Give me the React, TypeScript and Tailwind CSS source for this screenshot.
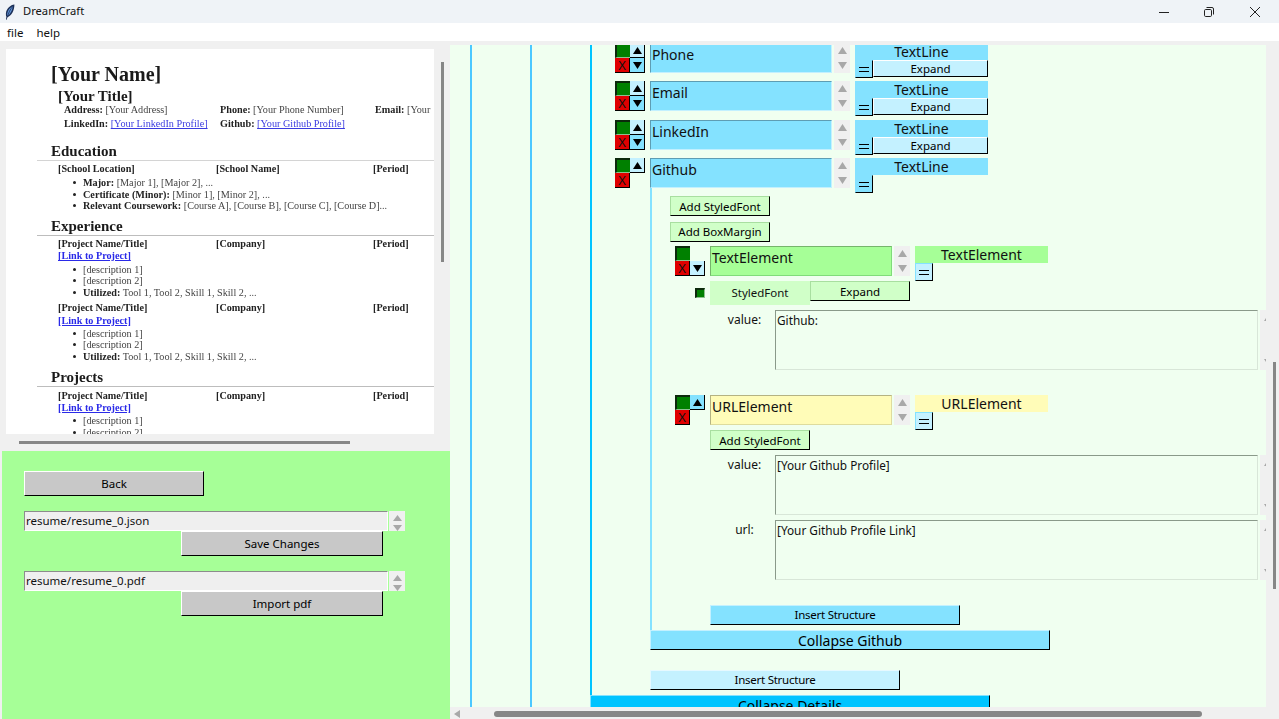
import React from "react";

const SANS = { fontFamily: '"Noto Sans", sans-serif' };

function Raised({ className = "", children }: { className?: string; children?: React.ReactNode }) {
  return (
    <div className={"flex items-center justify-center shrink-0 border-t border-l border-b border-r border-b-black border-r-black text-black " + className}>
      {children}
    </div>
  );
}

function Tri({ down = false, color = "#000", w = 9, h = 7 }: { down?: boolean; color?: string; w?: number; h?: number }) {
  return (
    <svg width={w} height={h} viewBox="0 0 10 8" preserveAspectRatio="none" className="block">
      <polygon points={down ? "0,0 10,0 5,8" : "5,0 10,8 0,8"} fill={color} />
    </svg>
  );
}

function Spinner({ tall = false, className = "" }: { tall?: boolean; className?: string }) {
  return (
    <div className={"w-[16px] shrink-0 bg-[#f0f0f0] flex flex-col items-center justify-between " + (tall ? "h-[30px] py-[4px] " : "h-[20px] pt-[4px] ") + className}>
      <Tri color="#a8a8a8" w={9} h={tall ? 7 : 6} />
      <Tri down color="#a8a8a8" w={9} h={tall ? 7 : 6} />
    </div>
  );
}

type Tone = "blue" | "green" | "yellow";

const FIELD: Record<Tone, string> = {
  blue: "bg-[#84e2ff] border-t-[#5e9db3] border-l-[#5e9db3] border-b-[#c2f0ff] border-r-[#c2f0ff]",
  green: "bg-[#a6ff97] border-t-[#76b56b] border-l-[#76b56b] border-b-[#80dc7a] border-r-[#80dc7a]",
  yellow: "bg-[#fffcb8] border-t-[#b5b383] border-l-[#b5b383] border-b-[#dedc9e] border-r-[#dedc9e]",
};
const LABEL: Record<Tone, string> = {
  blue: "bg-[#84e2ff]",
  green: "bg-[#a6ff97]",
  yellow: "bg-[#fffcb8]",
};

function Row({
  name,
  label,
  tone,
  up,
  down,
  upClass = "bg-[#c4f1ff]",
  downClass = "bg-[#84e2ff]",
  expand = false,
  eqClass = "bg-[#84e2ff]",
  className = "",
}: {
  name: string;
  label: string;
  tone: Tone;
  up?: boolean;
  down?: boolean;
  upClass?: string;
  downClass?: string;
  expand?: boolean;
  eqClass?: string;
  className?: string;
}) {
  return (
    <div className={"flex h-[35px] " + className}>
      <div className="grid grid-cols-[15px_15px] grid-rows-[15px_15px] h-[30px] shrink-0">
        <div className="bg-[#008000] border-t-2 border-l-2 border-t-[#0c2a0c] border-l-[#0c2a0c] border-b border-b-[#8fc08f]" />
        {up ? (
          <div className={"flex items-center justify-center border-b border-r border-b-black border-r-black " + upClass}>
            <Tri />
          </div>
        ) : (
          <div />
        )}
        <div className="bg-[#e00000] border-b border-r border-b-black border-r-black flex items-center justify-center text-[13px] leading-none text-[#111]">
          X
        </div>
        {down ? (
          <div className={"flex items-center justify-center border-b border-r border-b-black border-r-black " + downClass}>
            <Tri down />
          </div>
        ) : (
          <div />
        )}
      </div>
      <div className={"ml-[5px] w-[182px] h-[30px] shrink-0 border-t border-l border-b border-r px-[1px] text-[14px] leading-[22px] text-[#111] " + FIELD[tone]}>
        {name}
      </div>
      <Spinner tall className="ml-[2px]" />
      <div className="ml-[5px] w-[133px] shrink-0 flex flex-col">
        <div className={"h-[17px] text-center text-[14px] leading-[18px] text-[#111] " + LABEL[tone]}>{label}</div>
        <div className="flex">
          <Raised className={"w-[18px] h-[18px] border-t-[#84e2ff] border-l-[#84e2ff] text-[13px] leading-none " + eqClass}>
            <span className="block w-[10px] h-[5px] border-t border-b border-t-black border-b-black" />
          </Raised>
          {expand && (
            <Raised className="w-[115px] h-[17px] bg-[#c4f1ff] border-t-white border-l-white text-[11.5px] leading-none">
              Expand
            </Raised>
          )}
        </div>
      </div>
    </div>
  );
}

function LightBtn({ className = "", children }: { className?: string; children?: React.ReactNode }) {
  return (
    <Raised className={"w-[100px] bg-[#d0ffc8] border-t-[#a8dfa0] border-l-[#a8dfa0] text-[11.5px] leading-none " + className}>
      {children}
    </Raised>
  );
}

function TextBox({ label, value, className = "" }: { label: string; value: string; className?: string }) {
  return (
    <div className={"flex h-[60px] " + className}>
      <div className="ml-[44px] w-[61px] shrink-0 text-center text-[12px] leading-[20px] text-[#111]">{label}</div>
      <div className="w-[483px] h-[60px] shrink-0 bg-[#f0fff0] border-t border-l border-b border-r border-t-[#8a9a8a] border-l-[#8a9a8a] border-b-[#d8e6d8] border-r-[#d8e6d8] px-[1px] text-[11.8px] leading-[18px] text-[#111]">
        {value}
      </div>
      <Spinner tall className="h-[60px] ml-[2px]" />
    </div>
  );
}

function H({ children, className = "" }: { children: React.ReactNode; className?: string }) {
  return (
    <div className={"ml-[31px] h-[19px] pl-[14px] border-b border-b-[#bdbdbd] text-[15px] leading-[18px] font-bold text-[#1a1a1a] " + className}>
      {children}
    </div>
  );
}

function Cols({ a, b, c, className = "" }: { a: string; b: string; c: string; className?: string }) {
  return (
    <div className={"ml-[52px] flex h-[12px] text-[10.2px] leading-[12px] font-bold text-[#222] whitespace-nowrap " + className}>
      <span className="w-[158px] shrink-0">{a}</span>
      <span className="w-[157px] shrink-0">{b}</span>
      <span>{c}</span>
    </div>
  );
}

function Link({ className = "" }: { className?: string }) {
  return (
    <div className={"ml-[52px] h-[12px] text-[10.2px] leading-[12px] font-bold text-[#2a2ae8] underline " + className}>
      [Link to Project]
    </div>
  );
}

function Li({ children, className = "" }: { children: React.ReactNode; className?: string }) {
  return (
    <div className={"ml-[67px] flex h-[11.4px] items-center text-[10.2px] leading-[11px] text-[#444] whitespace-nowrap " + className}>
      <span className="w-[10px] shrink-0 flex items-center">
        <span className="block w-[3px] h-[3px] rounded-full bg-[#222]" />
      </span>
      <span>{children}</span>
    </div>
  );
}

function B({ children }: { children: React.ReactNode }) {
  return <b className="text-[#222]">{children}</b>;
}

function ProjectBlock({ mt, linkMt = "mt-0", liMt = "mt-[1px]" }: { mt: string; linkMt?: string; liMt?: string }) {
  return (
    <>
      <Cols a="[Project Name/Title]" b="[Company]" c="[Period]" className={mt} />
      <Link className={linkMt} />
      <Li className={liMt}>[description 1]</Li>
      <Li>[description 2]</Li>
      <Li>
        <B>Utilized:</B> Tool 1, Tool 2, Skill 1, Skill 2, ...
      </Li>
    </>
  );
}

function Resume() {
  return (
    <div className="ml-[6px] pt-[8px] w-[428px] h-[393px]">
      <div className="h-[385px] bg-white overflow-hidden blur-[0.3px]" style={{ fontFamily: '"Liberation Serif", serif' }}>
        <div className="ml-[45px] pt-[13px] h-[37px] text-[20px] leading-[24px] font-bold text-[#1a1a1a]">[Your Name]</div>
        <div className="ml-[52px] mt-[1px] h-[18px] text-[15px] leading-[18px] font-bold text-[#1a1a1a]">[Your Title]</div>
        <div className="ml-[58px] -mt-[2px] flex h-[14px] text-[10.2px] leading-[14px] text-[#444] whitespace-nowrap">
          <span className="w-[156px] shrink-0"><B>Address:</B> [Your Address]</span>
          <span className="w-[155px] shrink-0"><B>Phone:</B> [Your Phone Number]</span>
          <span><B>Email:</B> [Your</span>
        </div>
        <div className="ml-[58px] flex h-[14px] text-[10.2px] leading-[14px] text-[#444] whitespace-nowrap">
          <span className="w-[156px] shrink-0"><B>LinkedIn:</B> <span className="text-[#3b3be0] underline">[Your LinkedIn Profile]</span></span>
          <span><B>Github:</B> <span className="text-[#3b3be0] underline">[Your Github Profile]</span></span>
        </div>
        <H className="mt-[11px] border-b-[#d4d4d4]">Education</H>
        <Cols a="[School Location]" b="[School Name]" c="[Period]" className="mt-[2px]" />
        <Li className="mt-[2px]"><B>Major:</B> [Major 1], [Major 2], ...</Li>
        <Li><B>Certificate (Minor):</B> [Minor 1], [Minor 2], ...</Li>
        <Li><B>Relevant Coursework:</B> [Course A], [Course B], [Course C], [Course D]...</Li>
        <H className="mt-[6px]">Experience</H>
        <ProjectBlock mt="mt-[2px]" liMt="mt-[1.5px]" />
        <ProjectBlock mt="mt-[4px]" linkMt="mt-[1px]" liMt="mt-[1px]" />
        <H className="mt-[6px]">Projects</H>
        <ProjectBlock mt="mt-[2.5px]" liMt="mt-[1.5px]" />
      </div>
    </div>
  );
}

function FileRow({ value, action, mt }: { value: string; action: string; mt: string }) {
  return (
    <div className={mt}>
      <div className="flex">
        <div className="w-[364px] h-[20px] bg-[#efefef] border-t border-l border-b border-r border-t-[#8c8c8c] border-l-[#8c8c8c] border-b-white border-r-white px-[1px] text-[11.5px] leading-[18px] text-[#111]">
          {value}
        </div>
        <Spinner className="ml-[1px]" />
      </div>
      <Raised className="ml-[157px] w-[202px] h-[25px] pt-[1px] bg-[#c8c8c8] border-t-white border-l-white text-[11.5px] leading-none">
        {action}
      </Raised>
    </div>
  );
}

function TitleBar() {
  return (
    <div className="h-[23px] bg-[#eff3f7] flex items-center shrink-0">
      <svg width="10" height="16" viewBox="0 0 10 16" className="ml-[5px]">
        <path d="M9.4.6C5.6.9 1.4 4.6.9 9.4c-.1 1.4.1 2.6.5 3.4L1 15.6l.8.1.6-2.6C6.4 12.4 9.4 6.8 9.4.6z" fill="#1b2f57" />
        <path d="M7.8 2.2C5.2 3.4 2.6 6 2.2 9.8c-.1.8 0 1.6.1 2.2C5.2 10.4 7.4 6.4 7.8 2.2z" fill="#5f93d6" />
        <path d="M7.6 2.6C5.4 5.2 3.4 8.6 2.4 13.4" stroke="#12234a" strokeWidth=".7" fill="none" />
      </svg>
      <span className="ml-[8px] text-[11.2px] text-[#111]">DreamCraft</span>
      <div className="ml-auto flex items-center">
        <svg width="12" height="12" viewBox="0 0 12 12" className="mr-[33px]">
          <path d="M1 6.5h10" stroke="#222" strokeWidth="1" />
        </svg>
        <svg width="12" height="12" viewBox="0 0 12 12" className="mr-[34px]">
          <rect x="1.5" y="3.5" width="7" height="7" rx="1.2" fill="none" stroke="#222" />
          <path d="M3.5 1.5h5.5a1.5 1.5 0 0 1 1.5 1.5v5.5" fill="none" stroke="#222" />
        </svg>
        <svg width="12" height="12" viewBox="0 0 12 12" className="mr-[18px]">
          <path d="M1 1l10 10M11 1L1 11" stroke="#222" strokeWidth="1" />
        </svg>
      </div>
    </div>
  );
}

export default function App() {
  return (
    <div className="w-[1279px] h-[719px] overflow-hidden flex flex-col bg-[#f0f0f0]" style={SANS}>
      <TitleBar />
      <div className="h-[18px] pt-[2px] bg-white flex items-center shrink-0 text-[11.5px] text-[#111]">
        <span className="ml-[7px]">file</span>
        <span className="ml-[13px]">help</span>
      </div>

      <div className="flex flex-1 min-h-0">
        {/* left column */}
        <div className="w-[450px] shrink-0 flex flex-col">
          <div className="h-[410px] shrink-0 relative">
            <Resume />
            <div className="absolute left-[441px] top-[21px] w-[3px] h-[200px] bg-[#868686]" />
            <div className="absolute left-[19px] top-[400px] w-[331px] h-[3px] bg-[#868686]" />
          </div>
          <div className="ml-[2px] flex-1 bg-[#a6ff97] pl-[22px] pt-[20px]">
            <Raised className="w-[180px] h-[25px] pt-[1px] bg-[#c8c8c8] border-t-white border-l-white text-[11.5px] leading-none">Back</Raised>
            <FileRow mt="mt-[15px]" value="resume/resume_0.json" action="Save Changes" />
            <FileRow mt="mt-[15px]" value="resume/resume_0.pdf" action="Import pdf" />
          </div>
        </div>

        {/* right column */}
        <div className="flex-1 min-w-0 flex flex-col relative">
          <div className="flex min-h-0 flex-1 pt-[4px]">
            <div className="w-[816px] h-[662px] shrink-0 bg-[#f0fff0] overflow-hidden">
              <div className="-mt-[2px] ml-[20px] pl-[58px] border-l-2 border-l-[#4cc8ff]">
                <div className="pl-[58px] border-l-2 border-l-[#4cc8ff]">
                  <div className="border-l-2 border-l-[#00c4ff] pl-[23px] pb-[5px]">
                    <Row name="Phone" label="TextLine" tone="blue" up down expand />
                    <Row name="Email" label="TextLine" tone="blue" up down expand className="mt-[3px]" />
                    <Row name="LinkedIn" label="TextLine" tone="blue" up down expand className="mt-[4px]" />
                    <Row name="Github" label="TextLine" tone="blue" up className="mt-[3px]" />
                    <div className="ml-[35px] -mt-[5px] border-l-2 border-l-[#84e2ff] pl-[18px] pt-[8px] pb-[5px]">
                      <LightBtn className="h-[20px] pt-[1px]">Add StyledFont</LightBtn>
                      <LightBtn className="h-[20px] mt-[6px]">Add BoxMargin</LightBtn>
                      <Row
                        name="TextElement"
                        label="TextElement"
                        tone="green"
                        down
                        downClass="bg-[#c4f1ff]"
                        eqClass="bg-[#c4f1ff]"
                        className="mt-[4px] ml-[5px]"
                      />
                      <div className="flex h-[24px] ml-[25px]">
                        <div className="w-[10px] h-[10px] mt-[7px] bg-[#008000] border-t-2 border-l-2 border-t-[#0c2a0c] border-l-[#0c2a0c] border-b border-r border-b-[#8fc08f] border-r-[#8fc08f]" />
                        <div className="ml-[5px] w-[100px] h-[24px] bg-[#d0ffc8] flex items-center justify-center text-[11.5px] text-[#111]">StyledFont</div>
                        <LightBtn className="h-[20px] pt-[1px]">Expand</LightBtn>
                      </div>
                      <TextBox label="value:" value="Github:" className="mt-[5px]" />
                      <Row
                        name="URLElement"
                        label="URLElement"
                        tone="yellow"
                        up
                        upClass="bg-[#84e2ff]"
                        eqClass="bg-[#c4f1ff]"
                        className="mt-[25px] ml-[5px]"
                      />
                      <LightBtn className="h-[20px] ml-[40px] pt-[1px]">Add StyledFont</LightBtn>
                      <TextBox label="value:" value="[Your Github Profile]" className="mt-[5px]" />
                      <TextBox label="url:" value="[Your Github Profile Link]" className="mt-[5px]" />
                      <Raised className="ml-[40px] mt-[25px] w-[250px] h-[20px] bg-[#84e2ff] border-t-[#c4f1ff] border-l-[#c4f1ff] text-[11.5px] tracking-[-0.25px] leading-none">
                        Insert Structure
                      </Raised>
                    </div>
                    <Raised className="ml-[35px] w-[400px] h-[20px] pt-[1px] bg-[#84e2ff] border-t-[#c4f1ff] border-l-[#c4f1ff] text-[14px] leading-none">
                      Collapse Github
                    </Raised>
                    <Raised className="ml-[35px] mt-[20px] w-[250px] h-[20px] bg-[#c4f1ff] border-t-[#e6f9ff] border-l-[#e6f9ff] text-[11.5px] tracking-[-0.25px] leading-none">
                      Insert Structure
                    </Raised>
                  </div>
                  <Raised className="w-[400px] h-[20px] pt-[1px] bg-[#00c4ff] border-t-[#84e2ff] border-l-[#84e2ff] text-[14px] leading-none">
                    Collapse Details
                  </Raised>
                </div>
              </div>
            </div>
            <div className="w-[13px] shrink-0 relative">
              <div className="absolute left-[7px] top-[317px] w-[3px] h-[227px] bg-[#868686]" />
            </div>
          </div>
          <div className="h-[12px] shrink-0 relative">
            <div className="absolute left-[4px] top-[3px]">
              <svg width="6" height="8" viewBox="0 0 6 8" className="block"><polygon points="6,0 6,8 0,4" fill="#a8a8a8" /></svg>
            </div>
            <div className="absolute left-[44px] top-[4px] w-[708px] h-[6px] rounded-[3px] bg-[#868686]" />
          </div>
        </div>
      </div>
    </div>
  );
}
